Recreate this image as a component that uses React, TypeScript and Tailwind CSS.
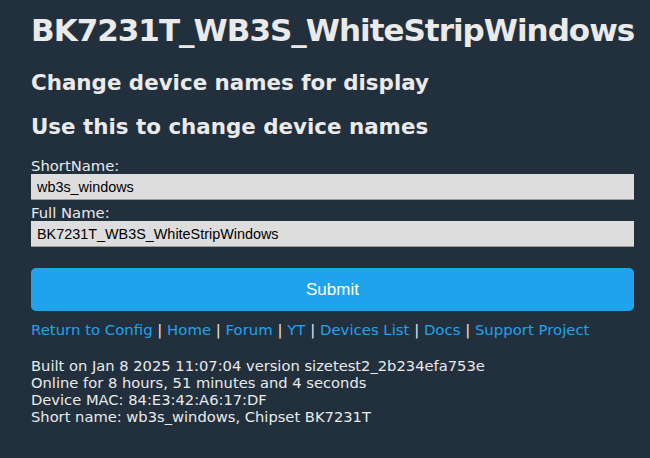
import React from "react";

const links = ["Return to Config", "Home", "Forum", "YT", "Devices List", "Docs", "Support Project"];

export default function App() {
    return (
        <div className="min-h-[458px] w-full bg-[#22303e] text-[#eaeaea] pl-[31px] pr-[16px] pt-[12px] font-['Verdana','DejaVu_Sans',sans-serif]">
            <h1 className="text-[31px] font-bold leading-[36px] tracking-[-1px]">BK7231T_WB3S_WhiteStripWindows</h1>
            <h2 className="mt-[23px] text-[21.4px] font-bold leading-[24px]">Change device names for display</h2>
            <h2 className="mt-[20px] text-[21.4px] font-bold leading-[24px]">Use this to change device names</h2>
            <form className="mt-[19px] flex flex-col text-[14.8px]" onSubmit={(e) => e.preventDefault()}>
                <label className="leading-[16px]">ShortName:</label>
                <input
                    defaultValue="wb3s_windows"
                    className="h-[26px] w-full bg-[#dddddd] text-black px-[6px] text-[14.4px] font-['Liberation_Sans',Arial,sans-serif] border-b border-[#999] outline-none"
                />
                <label className="mt-[5px] leading-[16px]">Full Name:</label>
                <input
                    defaultValue="BK7231T_WB3S_WhiteStripWindows"
                    className="h-[26px] w-full bg-[#dddddd] text-black px-[6px] text-[14.4px] font-['Liberation_Sans',Arial,sans-serif] border-b border-[#999] outline-none"
                />
                <button className="mt-[21px] h-[43px] w-full rounded-[5px] bg-[#1fa3ec] text-white text-[17px] font-['Liberation_Sans',Arial,sans-serif]">Submit</button>
            </form>
            <div className="mt-[9px] text-[14.9px] leading-[20px]">
                {links.map((l, i) => (
                    <span key={l}>
                        {i > 0 && <span className="text-[#eaeaea]"> | </span>}
                        <a href="#" className="text-[#1fa3ec]">{l}</a>
                    </span>
                ))}
            </div>
            <div className="mt-[17px] text-[14.7px] leading-[17px]">
                <div>Built on Jan 8 2025 11:07:04 version sizetest2_2b234efa753e</div>
                <div>Online for 8 hours, 51 minutes and 4 seconds</div>
                <div>Device MAC: 84:E3:42:A6:17:DF</div>
                <div>Short name: wb3s_windows, Chipset BK7231T</div>
            </div>
        </div>
    );
}
